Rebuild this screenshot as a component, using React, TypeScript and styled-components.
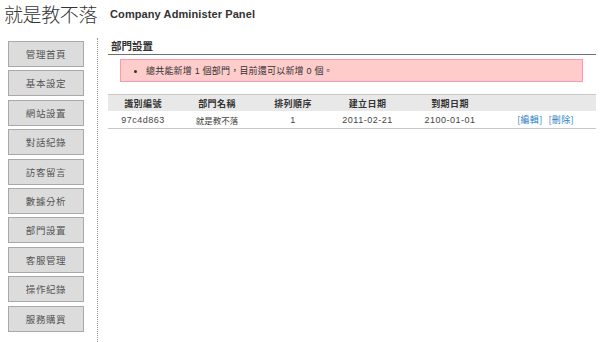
import React from 'react';
import styled, {createGlobalStyle} from "styled-components";

const GlobalStyle = createGlobalStyle`
    html, body {
        margin: 0;
        padding: 0;
        background: #ffffff;
        font-family: "Liberation Sans", Arial, "Noto Sans CJK TC", sans-serif;
        color: #333333;
    }
`

const menu = ["管理首頁", "基本設定", "網站設置", "對話紀錄", "訪客留言", "數據分析", "部門設置", "客服管理", "操作紀錄", "服務購買"];

const columns = [
    {title: "識別編號", width: 70},
    {title: "部門名稱", width: 78},
    {title: "排列順序", width: 74},
    {title: "建立日期", width: 75},
    {title: "到期日期", width: 90},
    {title: "", width: 101},
];

const rows = [
    {id: "97c4d863", name: "就是教不落", order: "1", created: "2011-02-21", expires: "2100-01-01"},
];

export default function App() {
    return (
        <>
            <GlobalStyle/>
            <Header>
                <SiteTitle>就是教不落</SiteTitle>
                <PanelName>Company Administer Panel</PanelName>
            </Header>
            <Body>
                <Sidebar>
                    {menu.map(item => (
                        <MenuButton key={item}>{item}</MenuButton>
                    ))}
                </Sidebar>
                <Main>
                    <SectionTitle>部門設置</SectionTitle>
                    <Notice>
                        <li>總共能新增 1 個部門，目前還可以新增 0 個。</li>
                    </Notice>
                    <Table>
                        <colgroup>
                            {columns.map((c, i) => <col key={i} style={{width: c.width}}/>)}
                        </colgroup>
                        <thead>
                            <tr>
                                {columns.map((c, i) => <Th key={i}>{c.title}</Th>)}
                            </tr>
                        </thead>
                        <tbody>
                            {rows.map(r => (
                                <tr key={r.id}>
                                    <Td>{r.id}</Td>
                                    <Td $cjk>{r.name}</Td>
                                    <Td>{r.order}</Td>
                                    <Td>{r.created}</Td>
                                    <Td>{r.expires}</Td>
                                    <Td>
                                        <ActionLink href="#">[編輯]</ActionLink>
                                        <ActionLink href="#">[刪除]</ActionLink>
                                    </Td>
                                </tr>
                            ))}
                        </tbody>
                    </Table>
                </Main>
            </Body>
        </>
    );
}

const Header = styled.header`
    height: 38px;
    display: flex;
    align-items: flex-start;
    padding: 2px 0 0 4px;
    box-sizing: border-box;
`
const SiteTitle = styled.h1`
    margin: 0;
    font-family: "Noto Sans CJK TC", sans-serif;
    font-size: 19px;
    font-weight: 300;
    line-height: 24px;
    color: #333333;
    letter-spacing: -0.4px;
`
const PanelName = styled.span`
    margin-left: 13px;
    margin-top: 5px;
    font-family: "Liberation Sans", Arial, sans-serif;
    font-size: 11px;
    font-weight: 700;
    line-height: 14px;
    color: #333333;
    letter-spacing: 0.1px;
`
const Body = styled.div`
    display: flex;
    height: calc(100vh - 38px);
`
const Sidebar = styled.nav`
    width: 97px;
    flex-shrink: 0;
    padding: 3px 0 0 8px;
    box-sizing: border-box;
    display: flex;
    flex-direction: column;
    gap: 3.4px;
`
const MenuButton = styled.div`
    width: 76px;
    height: 26px;
    box-sizing: border-box;
    background: #dcdcdc;
    border: 1px solid #a9a9a9;
    display: flex;
    align-items: center;
    justify-content: center;
    font-family: "Noto Sans CJK TC", sans-serif;
    font-size: 9.5px;
    color: #555555;
    letter-spacing: 0.6px;
`
const Main = styled.main`
    flex: 1;
    border-left: 1px dotted #999999;
    padding: 0 4px 0 10px;
`
const SectionTitle = styled.h2`
    margin: 0;
    height: 16px;
    line-height: 16px;
    padding-left: 3px;
    font-family: "Noto Sans CJK TC", sans-serif;
    font-size: 10.5px;
    font-weight: 700;
    color: #333333;
    border-bottom: 1px solid #707070;
`
const Notice = styled.ul`
    margin: 4px 13px 0 12px;
    height: 23px;
    box-sizing: border-box;
    padding: 0 0 0 25px;
    background: #ffcccc;
    border: 1px solid #ff99b0;
    display: flex;
    align-items: center;
    font-family: "Liberation Sans", Arial, "Noto Sans CJK TC", sans-serif;
    font-size: 9px;
    color: #333333;

    li {
        list-style: disc;
        letter-spacing: 0.2px;
    }
`
const Table = styled.table`
    margin-top: 12px;
    width: 100%;
    table-layout: fixed;
    border-collapse: collapse;
`
const Th = styled.th`
    height: 16px;
    padding: 0;
    background: #e8e8e8;
    border-top: 1px solid #c8c8c8;
    font-family: "Noto Sans CJK TC", sans-serif;
    font-size: 9px;
    font-weight: 700;
    color: #333333;
    text-align: center;
    letter-spacing: 0.4px;
`
const Td = styled.td<{ $cjk?: boolean }>`
    height: 17px;
    padding: 0;
    border-bottom: 1px solid #c8c8c8;
    font-family: "Liberation Sans", Arial, "Noto Sans CJK TC", sans-serif;
    font-size: ${p => (p.$cjk ? "8.5px" : "9px")};
    color: #444444;
    text-align: center;
    letter-spacing: ${p => (p.$cjk ? "0" : "0.5px")};
`
const ActionLink = styled.a`
    color: #2b7fc0;
    text-decoration: none;
    margin: 0 3px;
    font-family: "Noto Sans CJK TC", sans-serif;
    font-size: 9px;
    letter-spacing: 0.3px;
`
